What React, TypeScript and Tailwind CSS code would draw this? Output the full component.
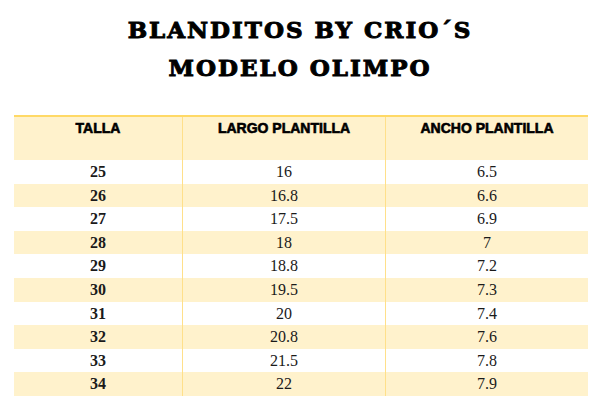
import React from "react";

const rows: [string, string, string][] = [
  ["25", "16", "6.5"],
  ["26", "16.8", "6.6"],
  ["27", "17.5", "6.9"],
  ["28", "18", "7"],
  ["29", "18.8", "7.2"],
  ["30", "19.5", "7.3"],
  ["31", "20", "7.4"],
  ["32", "20.8", "7.6"],
  ["33", "21.5", "7.8"],
  ["34", "22", "7.9"],
];

export default function App() {
  return (
    <div className="w-[600px] h-[408px] bg-white overflow-hidden">
      <div
        className="pt-[11px] flex flex-col items-center text-black text-[23px] leading-[38px] font-bold tracking-[2px] [-webkit-text-stroke:1px_black]"
        style={{ fontFamily: '"DejaVu Serif", serif' }}
      >
        <div>BLANDITOS BY CRIO´S</div>
        <div>MODELO OLIMPO</div>
      </div>
      <div className="mt-[28px] mx-[14px] w-[574px]">
        <div className="border-t-2 border-[#ffd966] bg-[#fff2cc] h-[45px] grid grid-cols-[168px_203px_203px]">
          {["TALLA", "LARGO PLANTILLA", "ANCHO PLANTILLA"].map((h, i) => (
            <div
              key={h}
              className={`text-center pt-[1px] text-[14px] leading-[20px] font-bold text-black [-webkit-text-stroke:0.6px_black] ${i > 0 ? "border-l border-[#ffe08a]" : ""}`}
              style={{ fontFamily: '"Liberation Sans", sans-serif' }}
            >
              {h}
            </div>
          ))}
        </div>
        {rows.map((r, idx) => (
          <div
            key={r[0]}
            className={`grid grid-cols-[168px_203px_203px] h-[23.6px] text-[16px] leading-[23.6px] text-[#1a1a1a] ${idx % 2 === 1 ? "bg-[#fff2cc]" : "bg-white"}`}
            style={{ fontFamily: '"Liberation Serif", serif' }}
          >
            <div className="text-center font-bold">{r[0]}</div>
            <div className="text-center border-l border-[#ffe08a]">{r[1]}</div>
            <div className="text-center border-l border-[#ffe08a]">{r[2]}</div>
          </div>
        ))}
      </div>
    </div>
  );
}
